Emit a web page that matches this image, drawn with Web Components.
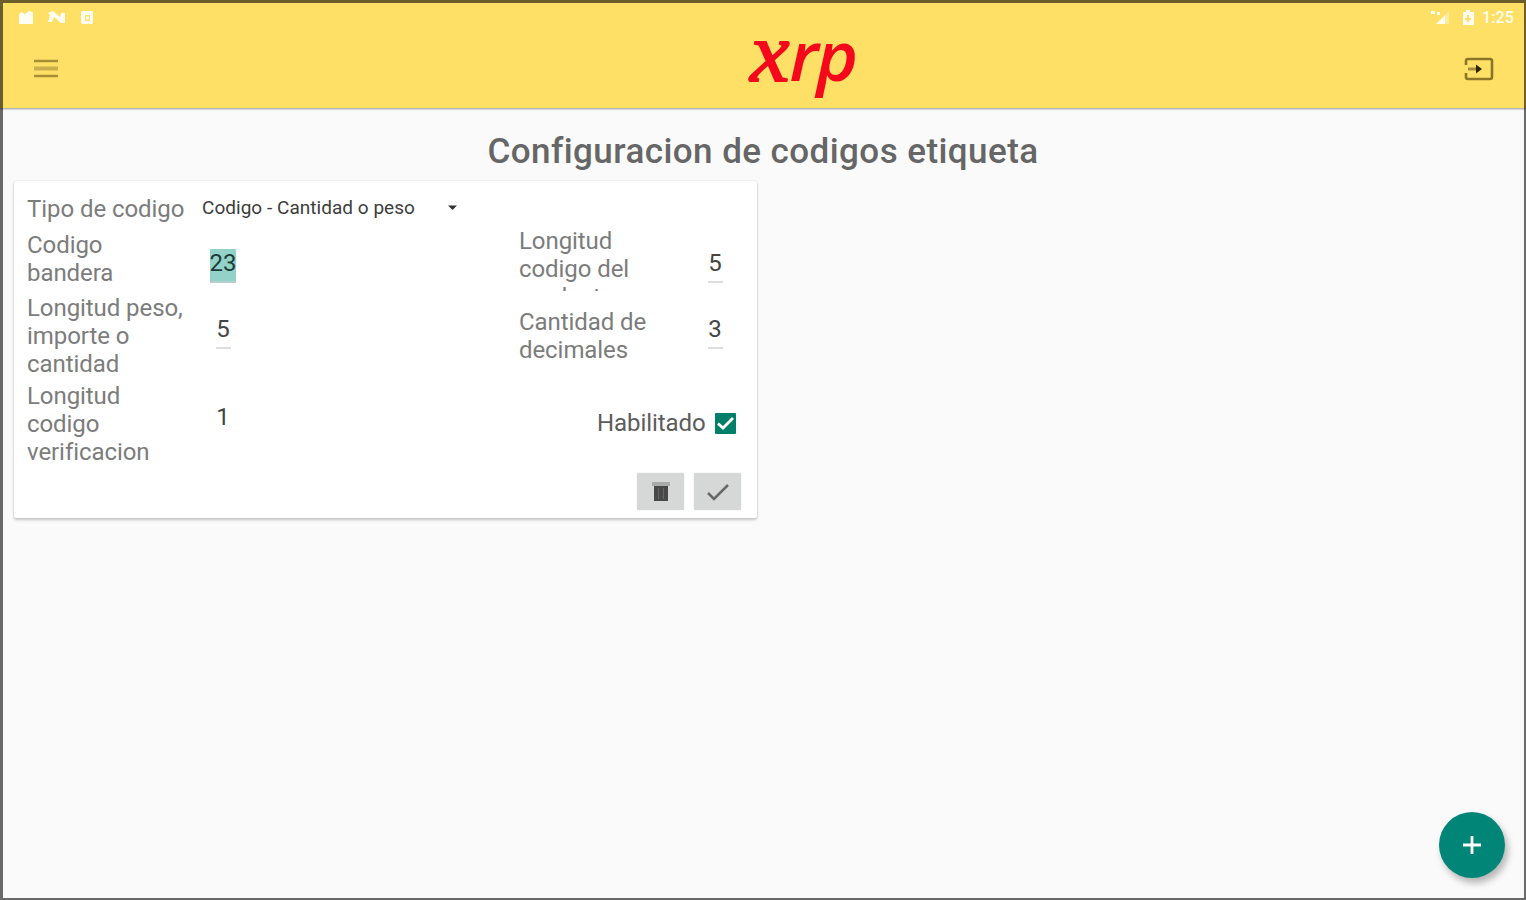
<!DOCTYPE html>
<html lang="es">
<head>
<meta charset="utf-8">
<title>xrp</title>
<style>
  html, body { margin: 0; height: 100%; }
  body { font-family: Roboto, "Liberation Sans", sans-serif; background: #fafafa; overflow: hidden; }
</style>
</head>
<body>
<app-screen>
  <status-bar slot="top"></status-bar>
  <app-toolbar slot="top"></app-toolbar>
  <page-title>Configuracion de codigos etiqueta</page-title>
  <code-card>
    <type-select label="Tipo de codigo" value="Codigo - Cantidad o peso"></type-select>
    <form-row style="height: 66px; --field-pad: 14px 0 0">
      <span>Codigo<br>bandera</span>
      <number-field slot="a" selected>23</number-field>
      <span slot="b">Longitud codigo del producto</span>
      <number-field slot="c">5</number-field>
    </form-row>
    <form-row style="height: 88px; --field-pad: 0 0 8px">
      <span>Longitud peso, importe o cantidad</span>
      <number-field slot="a">5</number-field>
      <span slot="b">Cantidad de decimales</span>
      <number-field slot="c">3</number-field>
    </form-row>
    <form-row style="height: 88px; --field-pad: 0 0 8px">
      <span>Longitud codigo verificacion</span>
      <number-field slot="a" plain>1</number-field>
      <check-box slot="b">Habilitado</check-box>
    </form-row>
    <card-button slot="actions" icon="trash"></card-button>
    <card-button slot="actions" icon="check"></card-button>
  </code-card>
  <add-button slot="fab"></add-button>
</app-screen>

<script>
class BaseElement extends HTMLElement {
  connectedCallback() {
    this.attachShadow({ mode: 'open' });
    this.shadowRoot.innerHTML = this.render();
  }
}

class AppScreen extends BaseElement {
  render() {
    return `
      <style>
        :host { display: flex; flex-direction: column; position: relative; height: 100vh; }
        header {
          height: 108px;
          flex: none;
          background: #ffe066;
          box-shadow: 0 1px 2px rgba(0, 0, 0, .4);
        }
        main { display: flex; flex-direction: column; flex: 1; }
        .fab { position: absolute; right: 21px; bottom: 22px; }
        .frame {
          position: absolute;
          inset: 0;
          border: solid rgba(0, 0, 0, .58);
          border-width: 3px 2px 2px 3px;
          pointer-events: none;
        }
      </style>
      <header><slot name="top"></slot></header>
      <main><slot></slot></main>
      <div class="fab"><slot name="fab"></slot></div>
      <div class="frame"></div>
    `;
  }
}

class StatusBar extends BaseElement {
  render() {
    return `
      <style>
        :host {
          display: flex;
          justify-content: space-between;
          align-items: center;
          box-sizing: border-box;
          height: 30px;
          padding: 5px 12px 0 18px;
          color: #fffdf0;
          font-size: 16px;
          font-weight: 500;
        }
        div { display: flex; align-items: center; }
        svg { display: block; fill: currentColor; }
        .time { line-height: 16px; letter-spacing: .1px; margin-left: 6px; }
      </style>
      <svg width="76" height="18" viewBox="0 0 76 18">
        <path d="M1 6l2-3 4 2 4-3 4 1v12H1z"/>
        <path d="M30 4l5-2 7 6 1-4h4v10h-4l-7-6-2 5h-4l2-7z"/>
        <path fill-rule="evenodd" d="M65 2h8q2 0 2 2v9q0 2-2 2h-8q-2 0-2-2V4q0-2 2-2zm2 4v6h5V6zm1 1.500h3v3h-3z"/>
      </svg>
      <div>
        <svg width="46" height="18" viewBox="0 0 46 18">
          <path d="M1 2h4v3H1zM7 3h3v3H7zM6 15l9-9v9z"/>
          <path d="M15 6l4-4v13h-4z" opacity=".4"/>
          <path fill-rule="evenodd" d="M36 1h4v2h4v13H33V3h3zm1 5v3h-2v2h2v2h2v-2h2V9h-2V6z"/>
        </svg>
        <span class="time">1:25</span>
      </div>
    `;
  }
}

class AppToolbar extends BaseElement {
  render() {
    return `
      <style>
        :host {
          display: grid;
          grid-template-columns: 1fr auto 1fr;
          align-items: center;
          height: 78px;
          padding: 0 32px 0 34px;
        }
        svg { display: block; }
        .exit { justify-self: end; }
        .logo {
          display: flex;
          align-items: baseline;
          margin-left: 78px;
          height: 78px;
          color: #f5081c;
          font: italic 600 74px/42px "Open Sans", "Noto Sans", sans-serif;
          letter-spacing: -2px;
          transform: scale(.96, .92);
        }
        .logo .x {
          font: italic 400 92px/42px "Liberation Serif", serif;
          -webkit-text-stroke: 2px #f5081c;
          letter-spacing: 0;
        }
      </style>
      <svg width="24" height="20" viewBox="0 0 24 20">
        <path d="M0 2h24M0 17h24" stroke="#a88e38" stroke-width="2.6"/>
        <path d="M0 9.5h24" stroke="#c9ae4b" stroke-width="4"/>
      </svg>
      <div class="logo"><span class="x">x</span><span>rp</span></div>
      <svg class="exit" width="30" height="24" viewBox="0 0 30 24" fill="none">
        <path d="M2 8V4q0-2 2-2h22q2 0 2 2v16q0 2-2 2H4q-2 0-2-2v-4" stroke="#8b7628" stroke-width="2.6"/>
        <path d="M4 12h10" stroke="#a58d38" stroke-width="3"/>
        <path d="M12 7.500l6 4.500-6 4.500z" fill="#2b2407"/>
      </svg>
    `;
  }
}

class PageTitle extends BaseElement {
  render() {
    return `
      <style>
        :host {
          display: block;
          height: 73px;
          line-height: 87px;
          text-align: center;
          font-size: 35px;
          font-weight: 500;
          letter-spacing: .43px;
          color: #666;
        }
      </style>
      <slot></slot>
    `;
  }
}

class CodeCard extends BaseElement {
  render() {
    return `
      <style>
        :host {
          display: flex;
          flex-direction: column;
          box-sizing: border-box;
          width: 743px;
          height: 337px;
          margin-left: 14px;
          padding-left: 13px;
          background: #fff;
          border-radius: 2px;
          box-shadow: 0 2px 3px rgba(0, 0, 0, .2), 0 0 2px rgba(0, 0, 0, .14);
          font-size: 24px;
          line-height: 28px;
          letter-spacing: -.07px;
          color: #7c7c7c;
        }
        .actions { display: flex; justify-content: flex-end; gap: 10px; padding: 5px 16px 0 0; }
      </style>
      <slot></slot>
      <div class="actions"><slot name="actions"></slot></div>
    `;
  }
}

class TypeSelect extends BaseElement {
  render() {
    return `
      <style>
        :host { display: flex; align-items: center; height: 45px; }
        .label { width: 175px; padding-top: 10px; white-space: nowrap; }
        .value {
          width: 246px;
          padding-top: 9px;
          font-size: 19px;
          letter-spacing: .03px;
          white-space: nowrap;
          color: #3c3c3c;
        }
        svg { margin-top: 8px; }
      </style>
      <span class="label">${this.getAttribute('label')}</span>
      <span class="value">${this.getAttribute('value')}</span>
      <svg width="10" height="6" viewBox="0 0 10 6"><path d="M0 .5h9L4.500 5z" fill="#333"/></svg>
    `;
  }
}

class FormRow extends BaseElement {
  render() {
    return `
      <style>
        :host {
          display: grid;
          grid-template-columns: 169px 323px 169px 1fr;
          align-items: center;
        }
        .label { max-height: 64px; overflow: hidden; width: 140px; }
        .first { width: 162px; }
        .wide { overflow: visible; }
        ::slotted(check-box) { margin: -2px 0 0 78px; }
      </style>
      <div class="first"><slot></slot></div>
      <slot name="a"></slot>
      <div class="label ${this.querySelector('check-box') ? 'wide' : ''}"><slot name="b"></slot></div>
      <slot name="c"></slot>
    `;
  }
}

class NumberField extends BaseElement {
  render() {
    return `
      <style>
        :host {
          display: flex;
          width: 54px;
          justify-content: center;
          padding: var(--field-pad, 0);
          color: #444;
          letter-spacing: 0;
        }
        span {
          box-sizing: border-box;
          height: 34px;
          min-width: 15px;
          text-align: center;
          border-bottom: 2px solid #ddd;
        }
        :host([selected]) span { background: #92d2c9; border-color: #b5cfca; color: #1e3d39; }
        :host([plain]) span { border-color: transparent; }
      </style>
      <span><slot></slot></span>
    `;
  }
}

class CheckBox extends BaseElement {
  render() {
    return `
      <style>
        :host { display: flex; align-items: center; gap: 9px; color: #5c5c5c; }
        svg { flex: none; }
      </style>
      <slot></slot>
      <svg width="21" height="21" viewBox="0 0 21 21">
        <rect width="21" height="21" rx="1" fill="#008068"/>
        <path d="M3 10.500l5 4.500L18 5" fill="none" stroke="#fff" stroke-width="2.8"/>
      </svg>
    `;
  }
}

class CardButton extends BaseElement {
  render() {
    const icons = {
      trash: '<path d="M4 3h18v4H4z" fill="#aaa"/><path d="M6 7h14v15H6z" fill="#484848"/><path d="M10.500 9v11M15.500 9v11" stroke="#666"/>',
      check: '<path d="M3 14l6 6L23 6" fill="none" stroke="#686868" stroke-width="2.6"/>'
    };
    return `
      <style>
        :host {
          display: flex;
          align-items: center;
          justify-content: center;
          width: 47px;
          height: 37px;
          background: #d6d7d7;
          border-radius: 2px;
          box-shadow: 0 0 1px #bbb;
        }
      </style>
      <svg width="26" height="26" viewBox="0 0 26 26">${icons[this.getAttribute('icon')]}</svg>
    `;
  }
}

class AddButton extends BaseElement {
  render() {
    return `
      <style>
        :host {
          display: flex;
          align-items: center;
          justify-content: center;
          width: 66px;
          height: 66px;
          border-radius: 50%;
          background: #008577;
          box-shadow: 3px 5px 7px rgba(0, 0, 0, .28);
        }
      </style>
      <svg width="18" height="18" viewBox="0 0 18 18">
        <path d="M9 0v18M0 9h18" stroke="#fff" stroke-width="2.8"/>
      </svg>
    `;
  }
}

customElements.define('app-screen', AppScreen);
customElements.define('status-bar', StatusBar);
customElements.define('app-toolbar', AppToolbar);
customElements.define('page-title', PageTitle);
customElements.define('code-card', CodeCard);
customElements.define('type-select', TypeSelect);
customElements.define('form-row', FormRow);
customElements.define('number-field', NumberField);
customElements.define('check-box', CheckBox);
customElements.define('card-button', CardButton);
customElements.define('add-button', AddButton);
</script>
</body>
</html>
